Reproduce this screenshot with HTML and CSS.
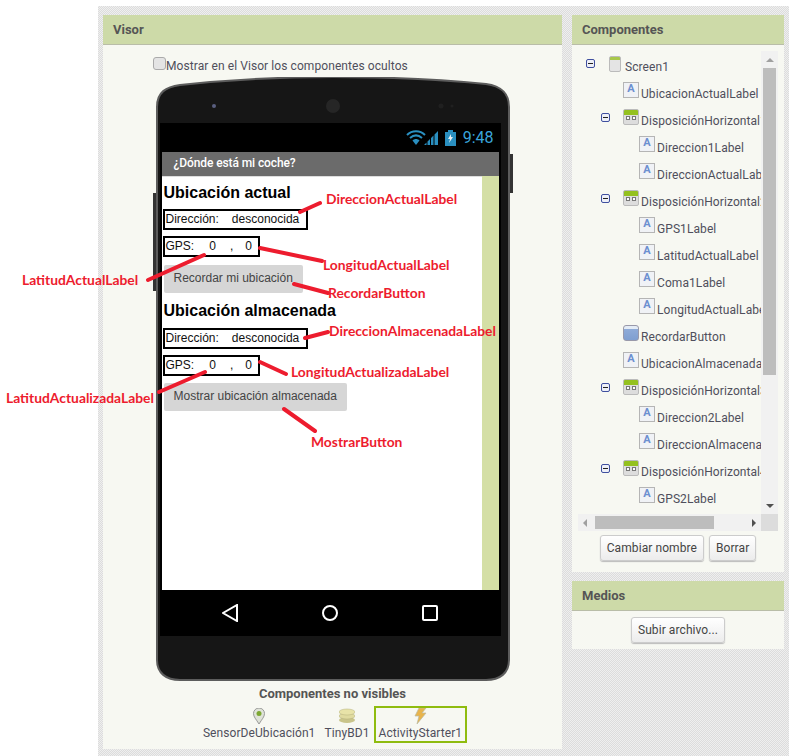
FILE: index.html
```html
<!DOCTYPE html>
<html>
<head>
<meta charset="utf-8">
<title>Visor</title>
<link rel="stylesheet" href="styles.css">
</head>
<body>
<div class="workspace">
    <div class="panel visor">
        <div class="panel-head">Visor</div>
        <div class="visor-body">
            <div class="hidden-check"><span class="checkbox"></span>Mostrar en el Visor los componentes ocultos</div>
            <div class="phone">
                <svg class="phone-shell" width="362" height="605" viewBox="-4 0 362 605">
                    <rect x="-3" y="116" width="4" height="98" fill="#333"/>
                    <rect x="353" y="77" width="4" height="39" fill="#333"/>
                    <path d="M1 30C1 15 10 10 24 8C80 2 130 0 177 0C224 0 280 2 330 7C344 9 353 15 353 30L353 583C353 596 344 603 330 603L24 603C10 603 1 596 1 583Z" fill="#161616" stroke="#5c5c5c" stroke-width="2"/>
                    <circle cx="58" cy="29" r="2" fill="#5a5f80"/>
                    <circle cx="177" cy="29" r="7" fill="#262626"/>
                    <circle cx="285" cy="29" r="2.500" fill="#202020"/>
                    <circle cx="296" cy="29" r="1.500" fill="#202020"/>
                </svg>
                <div class="status-bar">
                    <svg width="33" height="16" viewBox="0 0 33 16">
                        <g fill="none" stroke="#2a8fc0" stroke-width="2">
                            <path d="M1 5C6 0 14 0 19 5"/>
                            <path d="M4 8C8 4.500 12 4.500 16 8"/>
                        </g>
                        <path d="M6.500 10.500C8.500 8.500 11.500 8.500 13.500 10.500L10 15Z" fill="#2a8fc0"/>
                        <path d="M18 15L20.500 12.500V15ZM21.500 15V11.500L24 9V15ZM25 15V8L27.500 5.500V15ZM28.500 15V4.500L32 1V15Z" fill="#2a8fc0"/>
                    </svg>
                    <svg class="battery" width="11" height="16" viewBox="0 0 11 16">
                        <path d="M3 0H8V2H11V16H0V2H3Z" fill="#2a8fc0"/>
                        <path d="M6 4L3 9H5L4 13L8 7H6Z" fill="#e8f0f4"/>
                    </svg>
                    <span class="clock">9:48</span>
                </div>
                <div class="action-bar">¿Dónde está mi coche?</div>
                <div class="screen">
                    <div class="screen-content">
                        <h2 class="screen-title">Ubicación actual</h2>
                        <div class="box"><span>Dirección:</span><span class="addr">desconocida</span></div>
                        <div class="box"><span>GPS:</span><span class="coord">0</span><span class="comma">,</span><span class="coord2">0</span></div>
                        <div class="app-btn">Recordar mi ubicación</div>
                        <h2 class="screen-title second">Ubicación almacenada</h2>
                        <div class="box"><span>Dirección:</span><span class="addr">desconocida</span></div>
                        <div class="box"><span>GPS:</span><span class="coord">0</span><span class="comma">,</span><span class="coord2">0</span></div>
                        <div class="app-btn">Mostrar ubicación almacenada</div>
                    </div>
                    <div class="screen-strip"></div>
                </div>
                <div class="nav-bar">
                    <svg width="16" height="18" viewBox="0 0 16 18"><path d="M15 1V17L1 9Z" fill="none" stroke="#fff" stroke-width="2"/></svg>
                    <svg width="16" height="16" viewBox="0 0 16 16"><circle cx="8" cy="8" r="7" fill="none" stroke="#fff" stroke-width="2"/></svg>
                    <svg width="16" height="16" viewBox="0 0 16 16"><rect x="1" y="1" width="14" height="14" rx="1" fill="none" stroke="#fff" stroke-width="2"/></svg>
                </div>
            </div>
            <div class="nonvisible-title">Componentes no visibles</div>
            <div class="nonvisible">
                <div class="nv-item">
                    <svg width="12" height="16" viewBox="0 0 12 16"><path d="M6 16C3 11 .5 9 .5 5.500A5.500 5.500 0 0 1 11.500 5.500C11.500 9 9 11 6 16Z" fill="#dfe3d8" stroke="#999"/><circle cx="6" cy="5.500" r="2.500" fill="#7da832"/></svg>
                    <span>SensorDeUbicación1</span>
                </div>
                <div class="nv-item">
                    <svg width="16" height="14" viewBox="0 0 16 14"><ellipse cx="8" cy="11" rx="8" ry="3" fill="#c9c48a"/><ellipse cx="8" cy="7" rx="8" ry="3" fill="#e0dba0" stroke="#b5b07a" stroke-width=".5"/><ellipse cx="8" cy="3" rx="8" ry="3" fill="#e8e3a8" stroke="#b5b07a" stroke-width=".5"/></svg>
                    <span>TinyBD1</span>
                </div>
                <div class="nv-item selected">
                    <svg width="13" height="16" viewBox="0 0 13 16"><path d="M5 0H12L8 5H12L3 16L5 8H1Z" fill="#e8b44c" stroke="#b9b9a0" stroke-width=".7"/></svg>
                    <span>ActivityStarter1</span>
                </div>
            </div>
        </div>
    </div>
    <div class="side">
        <div class="panel components">
            <div class="panel-head">Componentes</div>
            <div class="tree-box">
                <div class="tree">
                    <div class="node root"><span class="toggle"></span><span class="ico-screen"></span><span class="name">Screen1</span></div>
                    <div class="node leaf1"><span class="ico-label">A</span><span class="name">UbicacionActualLabel</span></div>
                    <div class="node branch"><span class="toggle"></span><span class="ico-layout"><i></i><i></i></span><span class="name">DisposiciónHorizontal1</span></div>
                    <div class="node leaf2"><span class="ico-label">A</span><span class="name">Direccion1Label</span></div>
                    <div class="node leaf2"><span class="ico-label">A</span><span class="name">DireccionActualLabel</span></div>
                    <div class="node branch"><span class="toggle"></span><span class="ico-layout"><i></i><i></i></span><span class="name">DisposiciónHorizontal2</span></div>
                    <div class="node leaf2"><span class="ico-label">A</span><span class="name">GPS1Label</span></div>
                    <div class="node leaf2"><span class="ico-label">A</span><span class="name">LatitudActualLabel</span></div>
                    <div class="node leaf2"><span class="ico-label">A</span><span class="name">Coma1Label</span></div>
                    <div class="node leaf2"><span class="ico-label">A</span><span class="name">LongitudActualLabel</span></div>
                    <div class="node leaf1"><span class="ico-button"></span><span class="name">RecordarButton</span></div>
                    <div class="node leaf1"><span class="ico-label">A</span><span class="name">UbicacionAlmacenadaLabel</span></div>
                    <div class="node branch"><span class="toggle"></span><span class="ico-layout"><i></i><i></i></span><span class="name">DisposiciónHorizontal3</span></div>
                    <div class="node leaf2"><span class="ico-label">A</span><span class="name">Direccion2Label</span></div>
                    <div class="node leaf2"><span class="ico-label">A</span><span class="name">DireccionAlmacenadaLabel</span></div>
                    <div class="node branch"><span class="toggle"></span><span class="ico-layout"><i></i><i></i></span><span class="name">DisposiciónHorizontal4</span></div>
                    <div class="node leaf2"><span class="ico-label">A</span><span class="name">GPS2Label</span></div>
                </div>
                <div class="vscroll">
                    <span class="arrow up"></span>
                    <span class="vthumb"></span>
                    <span class="arrow down"></span>
                </div>
                <div class="hscroll">
                    <span class="arrow left"></span>
                    <span class="hthumb"></span>
                    <span class="arrow right"></span>
                </div>
                <div class="corner"></div>
            </div>
            <div class="panel-actions">
                <button class="gwt-btn">Cambiar nombre</button>
                <button class="gwt-btn">Borrar</button>
            </div>
        </div>
        <div class="panel media">
            <div class="panel-head">Medios</div>
            <div class="panel-actions media-actions">
                <button class="gwt-btn">Subir archivo...</button>
            </div>
        </div>
    </div>
</div>

<!-- anotaciones rojas encima de la captura -->
<svg class="callout-lines" width="791" height="756">
    <path d="M300 212L320 203M260 248L322 261M294 284L328 293M305 338L328 332M260 362L286 374M284 409L315 431M148 280L204 255M159 392L205 372"/>
</svg>
<span class="callout c1">DireccionActualLabel</span>
<span class="callout c2">LongitudActualLabel</span>
<span class="callout c3">RecordarButton</span>
<span class="callout c4">DireccionAlmacenadaLabel</span>
<span class="callout c5">LongitudActualizadaLabel</span>
<span class="callout c6">MostrarButton</span>
<span class="callout c7">LatitudActualLabel</span>
<span class="callout c8">LatitudActualizadaLabel</span>
</body>
</html>
```

FILE: styles.css
```css
* {
    box-sizing: border-box;
    margin: 0;
    padding: 0;
}
html, body {
    height: 756px;
    overflow: hidden;
}
body {
    position: relative;
    background: #fff;
    font-family: Roboto, sans-serif;
    font-size: 12px;
    letter-spacing: .08px;
    color: #4f4f5c;
}
.workspace {
    display: flex;
    gap: 10px;
    width: 691px;
    height: 750px;
    margin: 6px 0 0 98px;
    padding: 9px 5px;
    background: repeating-conic-gradient(#dcdcdc 0 25%, #efefef 0 50%) 0 0 / 2px 2px;
}
.panel {
    background: #f7f8f2;
}
.panel-head {
    height: 30px;
    padding-left: 10px;
    background: #cddaa8;
    border-bottom: 1px solid #b9bda8;
    font-size: 13px;
    font-weight: 700;
    letter-spacing: 0;
    line-height: 29px;
    color: #555;
}

/* visor */
.visor {
    width: 459px;
    height: 734px;
}
.visor-body {
    display: flex;
    flex-direction: column;
    align-items: center;
}
.hidden-check {
    display: flex;
    align-self: flex-start;
    height: 32px;
    margin-left: 50px;
    padding-top: 14px;
    line-height: 15px;
}
.checkbox {
    width: 13px;
    height: 13px;
    margin-top: -2px;
    background: #e4e4e4;
    border: 1px solid #aaa;
    border-radius: 3px;
}
.phone {
    position: relative;
    width: 354px;
    height: 604px;
    padding: 46px 9px 0 4px;
}
.phone-shell {
    position: absolute;
    top: 0;
    left: -4px;
}
.status-bar {
    position: relative;
    display: flex;
    justify-content: flex-end;
    align-items: center;
    height: 29px;
    padding-right: 7px;
    background: #000;
}
.battery {
    margin: 0 7px 0 6px;
}
.clock {
    font-size: 16px;
    letter-spacing: 0;
    color: #3aa5dc;
}
.action-bar {
    position: relative;
    height: 24px;
    padding-left: 12px;
    background: #6b6b6b;
    border-left: 2px solid #000;
    border-right: 2px solid #000;
    font-weight: 500;
    letter-spacing: -.1px;
    line-height: 23px;
    color: #fff;
}
.screen {
    position: relative;
    display: flex;
    height: 414px;
    background: #fff;
    border-left: 2px solid #000;
    border-right: 2px solid #000;
    box-shadow: inset 0 1px 0 #ddd;
    font-family: "Liberation Sans", Arial, sans-serif;
    letter-spacing: 0;
    color: #111;
}
.screen-content {
    flex: 1;
    padding: 7px 0 0 1px;
}
.screen-strip {
    width: 17px;
    background: #d4dfa5;
}
.screen-title {
    height: 20px;
    margin: 0 0 6px 1px;
    font-size: 16px;
    line-height: 20px;
    color: #000;
}
.second {
    margin-top: 8px;
    margin-bottom: 7px;
}
.box {
    display: flex;
    width: fit-content;
    height: 21px;
    margin-bottom: 6px;
    padding: 1px 7px 0 1px;
    border: 2px solid #000;
    line-height: 15px;
}
.addr {
    margin-left: 13px;
}
.coord {
    margin-left: 15px;
}
.comma {
    margin-left: 14px;
}
.coord2 {
    margin-left: 12px;
    margin-right: -1px;
}
.app-btn {
    width: fit-content;
    height: 28px;
    margin: 8px 0 0 1px;
    padding: 0 10px;
    background: #d6d6d6;
    border-radius: 2px;
    line-height: 27px;
    color: #444;
}
.second ~ .app-btn {
    margin-top: 7px;
}
.nav-bar {
    position: relative;
    display: flex;
    justify-content: center;
    align-items: center;
    gap: 84px;
    height: 46px;
    background: #000;
}
.nonvisible-title {
    margin-top: 5px;
    font-size: 13px;
    font-weight: 700;
    letter-spacing: 0;
    line-height: 15px;
    color: #555;
}
.nonvisible {
    display: flex;
    align-items: flex-start;
    gap: 9px;
    margin: 5px 0 0 5px;
}
.nv-item {
    display: flex;
    flex-direction: column;
    align-items: center;
    height: 37px;
    padding-top: 2px;
    line-height: 16px;
}
.nv-item svg {
    height: 16px;
    margin-bottom: 1px;
}
.selected {
    padding: 0 3px;
    border: 2px solid #8fbc0f;
    margin-left: -5px;
}

/* componentes */
.side {
    display: flex;
    flex-direction: column;
    gap: 9px;
    width: 212px;
}
.components {
    height: 557px;
}
.tree-box {
    display: grid;
    grid-template-columns: 183px 17px;
    grid-template-rows: 463px 17px;
    width: 200px;
    margin: 6px 0 0 6px;
}
.tree {
    overflow: hidden;
    padding-top: 2px;
}
.node {
    display: flex;
    align-items: center;
    height: 27px;
    white-space: nowrap;
}
.root {
    padding-left: 8px;
}
.branch {
    padding-left: 23px;
}
.leaf1 {
    padding-left: 45px;
}
.leaf2 {
    padding-left: 61px;
}
.toggle {
    position: relative;
    flex: none;
    width: 9px;
    height: 9px;
    margin: -6px 13px 0 0;
    border: 1px solid #3f4f9f;
    border-radius: 2px;
    background: #eef0f8;
}
.toggle::after {
    content: "";
    position: absolute;
    top: 3px;
    left: 1px;
    width: 5px;
    height: 1px;
    background: #222;
}
.root .toggle {
    margin-right: 14px;
}
.name {
    color: #4f4f5c;
}
.ico-screen {
    flex: none;
    width: 12px;
    height: 16px;
    margin: -6px 4px 0 0;
    background: linear-gradient(#a8c84a 0 3px, #e4e4e4 3px);
    border: 1px solid #bbb;
    border-radius: 2px;
}
.ico-label {
    flex: none;
    width: 16px;
    height: 16px;
    margin: -7px 2px 0 0;
    background: #f0f2f6;
    border: 1px solid #b5b5b5;
    font-size: 11px;
    font-weight: 700;
    line-height: 12px;
    text-align: center;
    color: #6c8fd0;
}
.ico-layout {
    display: flex;
    flex: none;
    justify-content: center;
    gap: 2px;
    width: 16px;
    height: 16px;
    margin: -7px 2px 0 0;
    padding-top: 6px;
    background: linear-gradient(#94c11f 0 5px, #ddd 5px);
    border: 1px solid #bbb;
    border-radius: 2px;
}
.ico-layout i {
    width: 4px;
    height: 4px;
    background: #fff;
    border: 1px solid #777;
}
.ico-button {
    flex: none;
    width: 16px;
    height: 16px;
    margin: -7px 2px 0 0;
    background: linear-gradient(#e4ecf6 0 3px, #8fabd8 3px, #7f9fd0);
    border: 1px solid #99a;
    border-radius: 3px;
}
.vscroll {
    display: flex;
    flex-direction: column;
    justify-content: space-between;
    align-items: center;
    background: #f1f1f1;
}
.vthumb {
    width: 13px;
    height: 307px;
    margin-bottom: auto;
    background: #bdbdbd;
}
.hscroll {
    display: flex;
    align-items: center;
    background: #f1f1f1;
}
.hthumb {
    width: 119px;
    height: 13px;
    margin-right: auto;
    background: #bdbdbd;
}
.corner {
    background: #dcdcdc;
}
.arrow {
    flex: none;
    width: 17px;
    height: 17px;
    background: #f1f1f1;
    position: relative;
}
.arrow::after {
    content: "";
    position: absolute;
    top: 5px;
    left: 5px;
    border: 4px solid transparent;
}
.up::after {
    top: 3px;
    border-bottom-color: #a0a0a0;
}
.down::after {
    top: 7px;
    border-top-color: #505050;
}
.left::after {
    left: 1px;
    border-right-color: #a0a0a0;
}
.right::after {
    left: 8px;
    border-left-color: #505050;
}
.panel-actions {
    display: flex;
    justify-content: center;
    gap: 5px;
    margin-top: 4px;
}
.gwt-btn {
    height: 26px;
    padding: 0 6px;
    background: linear-gradient(#fff, #ececec);
    border: 1px solid #ccc;
    border-radius: 3px;
    box-shadow: 0 1px 1px #bbb;
    font-family: Roboto, sans-serif;
    font-size: 12px;
    letter-spacing: .08px;
    color: #444;
}
.media {
    height: 68px;
}
.media-actions {
    margin-top: 6px;
}

/* anotaciones */
.callout-lines {
    position: absolute;
    top: 0;
    left: 0;
}
.callout-lines path {
    fill: none;
    stroke: #ed1c2e;
    stroke-width: 4;
    stroke-linecap: round;
}
.callout {
    position: absolute;
    font-family: Lato, sans-serif;
    font-size: 13.850px;
    font-weight: 700;
    letter-spacing: 0;
    line-height: 16px;
    color: #ed1c2e;
}
.c1 { left: 326px; top: 191px; }
.c2 { left: 323px; top: 257px; }
.c3 { left: 328px; top: 285px; }
.c4 { left: 329px; top: 323px; }
.c5 { left: 291px; top: 364px; }
.c6 { left: 311px; top: 434px; }
.c7 { left: 22px; top: 272px; }
.c8 { left: 6px; top: 390px; }
```
